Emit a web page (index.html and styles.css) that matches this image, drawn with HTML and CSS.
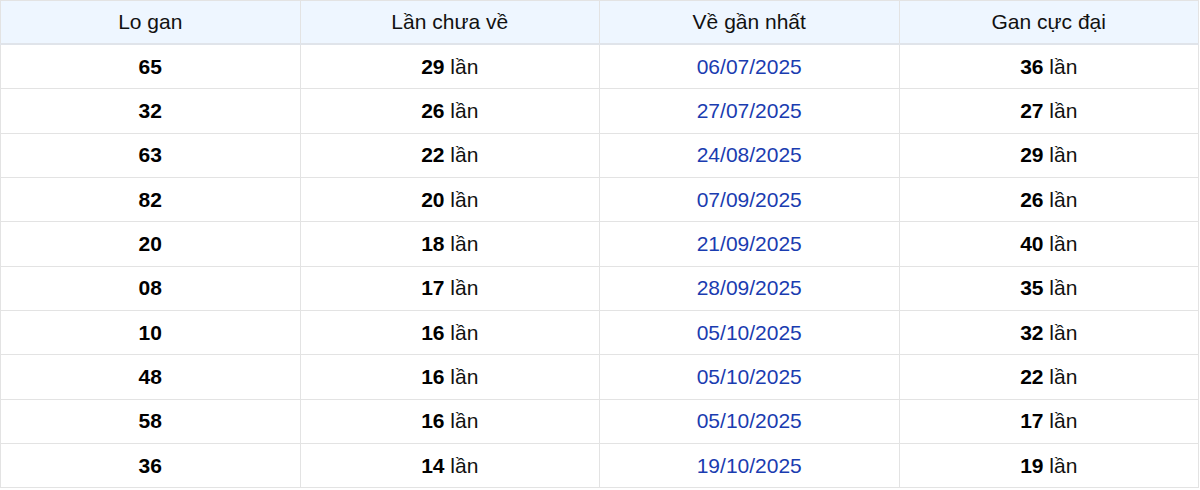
FILE: index.html
```html
<!DOCTYPE html>
<html lang="vi">
<head>
<meta charset="utf-8">
<link rel="stylesheet" href="styles.css">
</head>
<body>
<table class="gan">
  <thead>
    <tr><th>Lo gan</th><th>Lần chưa về</th><th>Về gần nhất</th><th>Gan cực đại</th></tr>
  </thead>
  <tbody>
    <tr><td><b>65</b></td><td><b>29</b> lần</td><td class="date">06/07/2025</td><td><b>36</b> lần</td></tr>
    <tr><td><b>32</b></td><td><b>26</b> lần</td><td class="date">27/07/2025</td><td><b>27</b> lần</td></tr>
    <tr><td><b>63</b></td><td><b>22</b> lần</td><td class="date">24/08/2025</td><td><b>29</b> lần</td></tr>
    <tr><td><b>82</b></td><td><b>20</b> lần</td><td class="date">07/09/2025</td><td><b>26</b> lần</td></tr>
    <tr><td><b>20</b></td><td><b>18</b> lần</td><td class="date">21/09/2025</td><td><b>40</b> lần</td></tr>
    <tr><td><b>08</b></td><td><b>17</b> lần</td><td class="date">28/09/2025</td><td><b>35</b> lần</td></tr>
    <tr><td><b>10</b></td><td><b>16</b> lần</td><td class="date">05/10/2025</td><td><b>32</b> lần</td></tr>
    <tr><td><b>48</b></td><td><b>16</b> lần</td><td class="date">05/10/2025</td><td><b>22</b> lần</td></tr>
    <tr><td><b>58</b></td><td><b>16</b> lần</td><td class="date">05/10/2025</td><td><b>17</b> lần</td></tr>
    <tr><td><b>36</b></td><td><b>14</b> lần</td><td class="date">19/10/2025</td><td><b>19</b> lần</td></tr>
  </tbody>
</table>
</body>
</html>
```
FILE: styles.css
```css
html, body {
  margin: 0;
  padding: 0;
  background: #ffffff;
}
.gan {
  width: 1199px;
  border-collapse: collapse;
  table-layout: fixed;
  font-family: "Liberation Sans", Arial, sans-serif;
  font-size: 21px;
  color: #111111;
}
.gan th, .gan td {
  border: 1px solid #e3e3e3;
  text-align: center;
  vertical-align: middle;
  padding: 0;
}
.gan th {
  background: #eef6ff;
  font-weight: normal;
  height: 42px;
  border-bottom: 2px solid #e0e4ea;
}
.gan td {
  height: 43.33px;
}
.gan b {
  font-weight: bold;
  color: #000000;
}
.gan .date {
  color: #1a3cb0;
}
```
